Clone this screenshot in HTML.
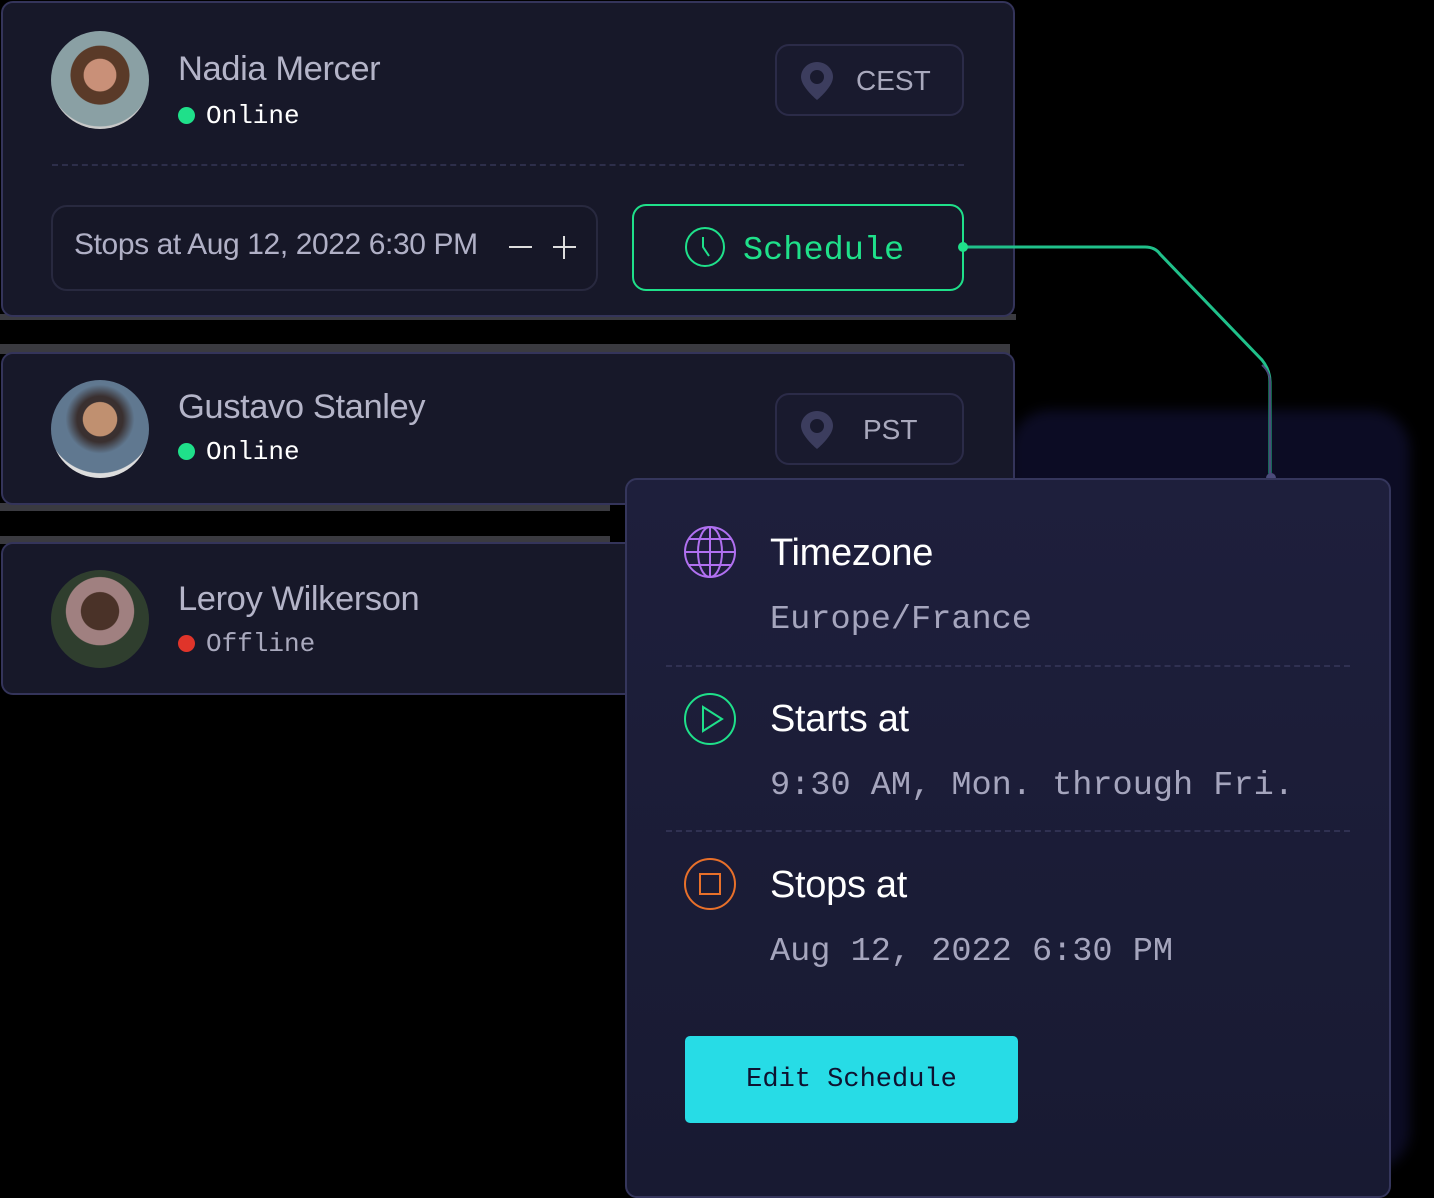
<!DOCTYPE html>
<html><head><meta charset="utf-8"><style>
*{box-sizing:border-box;margin:0;padding:0}
body{width:1434px;height:1179px;background:#000;position:relative;overflow:hidden;font-family:"Liberation Sans",sans-serif}
.abs{position:absolute}
.card{position:absolute;background:#171829;border:2px solid #34345a;border-radius:12px}
.av{position:absolute;width:98px;height:98px;border-radius:50%}
.name{position:absolute;font-size:34.5px;color:#b4b4c8;letter-spacing:-0.4px}
.st{position:absolute;font-family:"Liberation Mono",monospace;font-size:26px}
.dot{display:inline-block;width:17px;height:17px;border-radius:50%;margin-right:11px;vertical-align:-1px}
.tz{position:absolute;border:2px solid #2b2b48;border-radius:14px;background:#191a2e;color:#a9a9bd;font-size:28px}
.mono{font-family:"Liberation Mono",monospace}
.ttl{position:absolute;left:770px;color:#fff;font-size:38px;letter-spacing:-0.3px}
.sub{position:absolute;left:770px;color:#a5a5bd;font-family:"Liberation Mono",monospace;font-size:33.6px}
.dash{position:absolute;left:666px;width:684px;border-top:2px dashed #303152}
</style></head><body>
<div class="abs" style="left:0;top:314px;width:1016px;height:6px;background:#3a3a40"></div>
<div class="abs" style="left:0;top:344px;width:1010px;height:10px;background:#3a3a40"></div>
<div class="abs" style="left:0;top:503px;width:610px;height:8px;background:#3a3a40"></div>
<div class="abs" style="left:0;top:536px;width:610px;height:8px;background:#3a3a40"></div>
<div class="abs" style="left:1010px;top:410px;width:400px;height:760px;background:#0c0c24;border-radius:40px;filter:blur(6px)"></div>

<div class="card" style="left:1px;top:1px;width:1014px;height:316px"></div>
<div class="av" style="left:51px;top:31px;background:radial-gradient(circle at 50% 45%,#c99078 0 22%,#5a3a28 23% 40%,#8aa0a4 41% 70%,#c8c8c8 71%)"></div>
<div class="name" style="left:178px;top:50px">Nadia Mercer</div>
<div class="st" style="left:178px;top:101px;color:#fff"><span class="dot" style="background:#1fe08a"></span>Online</div>
<div class="tz" style="left:775px;top:44px;width:189px;height:72px">
<svg class="abs" style="left:22px;top:14px" width="36" height="42" viewBox="0 0 36 42"><path d="M18 2C9 2 2 9 2 17c0 10 16 23 16 23s16-13 16-23C34 9 27 2 18 2z" fill="#3c3d5e"/><circle cx="18" cy="17" r="7" fill="#191a2e"/></svg>
<span class="abs" style="left:79px;top:19px">CEST</span></div>
<div class="abs" style="left:52px;top:164px;width:912px;border-top:2px dashed #2d2e4a"></div>
<div class="abs" style="left:51px;top:205px;width:547px;height:86px;border:2px solid #28293f;border-radius:16px;background:#161727"></div>
<div class="abs" style="left:74px;top:228px;font-size:30px;color:#b0b0c6;letter-spacing:-0.4px">Stops at Aug 12, 2022 6:30 PM</div>
<div class="abs" style="left:509px;top:246px;width:23px;height:2px;background:#ddd"></div>
<div class="abs" style="left:553px;top:246px;width:23px;height:2px;background:#ddd"></div>
<div class="abs" style="left:563px;top:236px;width:2px;height:23px;background:#ddd"></div>
<div class="abs" style="left:632px;top:204px;width:332px;height:87px;border:2px solid #1fe08a;border-radius:14px"></div>
<svg class="abs" style="left:684px;top:226px" width="42" height="42" viewBox="0 0 42 42"><circle cx="21" cy="21" r="19" fill="none" stroke="#1fe08a" stroke-width="2"/><path d="M19 11v10l6 9" fill="none" stroke="#1fe08a" stroke-width="2"/></svg>
<div class="abs mono" style="left:743px;top:232px;font-size:33.6px;color:#1fe08a">Schedule</div>
<svg class="abs" style="left:0;top:0" width="1434" height="1179"><path d="M963 247H1145Q1155 247 1160 254L1262 360Q1270 370 1270 382V478" fill="none" stroke="#20c08a" stroke-width="3"/><path d="M1262 365Q1270 372 1270 382V478" fill="none" stroke="#4b4b7a" stroke-width="2"/><circle cx="963" cy="247" r="5" fill="#1fe08a"/><circle cx="1271" cy="478" r="5" fill="#4b4b7a"/></svg>

<div class="card" style="left:1px;top:352px;width:1014px;height:153px"></div>
<div class="av" style="left:51px;top:380px;background:radial-gradient(circle at 50% 40%,#c09070 0 22%,#3a3030 23% 30%,#607890 45% 70%,#ddd 71%)"></div>
<div class="name" style="left:178px;top:388px">Gustavo Stanley</div>
<div class="st" style="left:178px;top:437px;color:#fff"><span class="dot" style="background:#1fe08a"></span>Online</div>
<div class="tz" style="left:775px;top:393px;width:189px;height:72px">
<svg class="abs" style="left:22px;top:14px" width="36" height="42" viewBox="0 0 36 42"><path d="M18 2C9 2 2 9 2 17c0 10 16 23 16 23s16-13 16-23C34 9 27 2 18 2z" fill="#3c3d5e"/><circle cx="18" cy="17" r="7" fill="#191a2e"/></svg>
<span class="abs" style="left:86px;top:19px">PST</span></div>

<div class="card" style="left:1px;top:542px;width:700px;height:153px"></div>
<div class="av" style="left:51px;top:570px;background:radial-gradient(circle at 50% 42%,#4a3228 0 25%,#a08080 26% 45%,#2f3e2e 46%)"></div>
<div class="name" style="left:178px;top:580px">Leroy Wilkerson</div>
<div class="st" style="left:178px;top:629px;color:#a9a9bd"><span class="dot" style="background:#e0342a"></span>Offline</div>

<div class="abs" style="left:625px;top:478px;width:766px;height:720px;background:linear-gradient(#1e1f3c,#181a32);border:2px solid #35365c;border-radius:12px"></div>
<svg class="abs" style="left:683px;top:525px" width="54" height="54" viewBox="0 0 54 54" fill="none" stroke="#b070f0" stroke-width="2"><circle cx="27" cy="27" r="25"/><ellipse cx="27" cy="27" rx="12" ry="25"/><path d="M27 2v50M2 27h50M6 14h42M6 40h42"/></svg>
<div class="ttl" style="top:532px">Timezone</div>
<div class="sub" style="top:601px">Europe/France</div>
<div class="dash" style="top:665px"></div>
<svg class="abs" style="left:683px;top:692px" width="54" height="54" viewBox="0 0 54 54" fill="none" stroke="#1fe08a" stroke-width="2"><circle cx="27" cy="27" r="25"/><path d="M20 15v24l19-12z"/></svg>
<div class="ttl" style="top:698px">Starts at</div>
<div class="sub" style="top:767px">9:30 AM, Mon. through Fri.</div>
<div class="dash" style="top:830px"></div>
<svg class="abs" style="left:683px;top:857px" width="54" height="54" viewBox="0 0 54 54" fill="none" stroke="#e8702a" stroke-width="2"><circle cx="27" cy="27" r="25"/><rect x="17" y="17" width="20" height="20"/></svg>
<div class="ttl" style="top:864px">Stops at</div>
<div class="sub" style="top:933px">Aug 12, 2022 6:30 PM</div>
<div class="abs mono" style="left:685px;top:1036px;width:333px;height:87px;background:#27dce6;border-radius:5px;color:#0e1230;font-size:27px;text-align:center;line-height:89px">Edit Schedule</div>
</body></html>
